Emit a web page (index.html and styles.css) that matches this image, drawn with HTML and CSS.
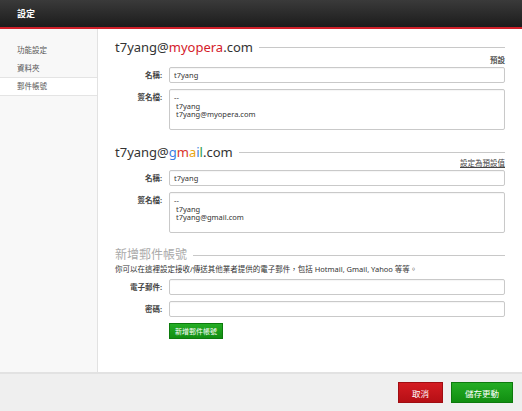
FILE: index.html
```html
<!DOCTYPE html>
<html lang="zh-Hant">
<head>
<meta charset="utf-8">
<link rel="stylesheet" href="styles.css">
</head>
<body>
<div class="app">
  <header class="topbar"><span class="title">設定</span></header>
  <div class="body">
    <nav class="sidebar">
      <div class="nav-item">功能設定</div>
      <div class="nav-item">資料夾</div>
      <div class="nav-item active">郵件帳號</div>
    </nav>
    <main class="content">
      <section class="account">
        <h2 class="heading"><span class="htext">t7yang@<span class="red">myopera</span>.com</span><span class="rule"></span></h2>
        <div class="aux"><span class="bold">預設</span></div>
        <div class="row"><label class="lbl">名稱:</label><div class="field">t7yang</div></div>
        <div class="row"><label class="lbl">簽名檔:</label><div class="field area">--<br>&nbsp;t7yang<br>&nbsp;t7yang@myopera.com</div></div>
      </section>
      <section class="account second">
        <h2 class="heading"><span class="htext">t7yang@<span class="g-blue">g</span><span class="g-red">m</span><span class="g-yellow">a</span><span class="g-blue">i</span><span class="g-green">l</span>.com</span><span class="rule"></span></h2>
        <div class="aux tight"><a class="link">設定為預設值</a></div>
        <div class="row"><label class="lbl">名稱:</label><div class="field">t7yang</div></div>
        <div class="row"><label class="lbl">簽名檔:</label><div class="field area">--<br>&nbsp;t7yang<br>&nbsp;t7yang@gmail.com</div></div>
      </section>
      <section class="account third">
        <h2 class="heading gray"><span class="htext">新增郵件帳號</span><span class="rule"></span></h2>
        <p class="desc">你可以在這裡設定接收/傳送其他業者提供的電子郵件，包括 Hotmail, Gmail, Yahoo 等等。</p>
        <div class="row"><label class="lbl">電子郵件:</label><div class="field"></div></div>
        <div class="row"><label class="lbl">密碼:</label><div class="field"></div></div>
        <div class="row"><span class="lbl"></span><button class="btn small green">新增郵件帳號</button></div>
      </section>
    </main>
  </div>
  <footer class="footer">
    <button class="btn red big cancel">取消</button>
    <button class="btn green big save">儲存更動</button>
  </footer>
</div>
</body>
</html>
```

FILE: styles.css
```css
html, body {
  margin: 0;
  padding: 0;
  width: 522px;
  height: 411px;
  overflow: hidden;
  font-family: "Noto Sans", "Noto Sans CJK TC", sans-serif;
  color: #333;
  background: #fff;
}
.app {
  display: flex;
  flex-direction: column;
  height: 411px;
}
.topbar {
  height: 27px;
  flex: none;
  background: linear-gradient(#3a3a3a, #1c1c1c);
  border-bottom: 2px solid #d0202a;
  display: flex;
  align-items: center;
  padding-left: 17px;
}
.title {
  color: #fff;
  font-size: 9px;
  font-weight: bold;
}
.body {
  flex: 1;
  display: flex;
  min-height: 0;
}
.sidebar {
  width: 98px;
  flex: none;
  background: #f8f8f8;
  border-right: 1px solid #e2e2e2;
  padding-top: 12px;
  box-sizing: border-box;
}
.nav-item {
  height: 17px;
  line-height: 17px;
  font-size: 7.5px;
  color: #555;
  padding-left: 17px;
  border-top: 1px solid transparent;
}
.nav-item.active {
  background: #fff;
  border-top: 1px solid #e4e4e4;
  border-bottom: 1px solid #e4e4e4;
}
.content {
  flex: 1;
  padding: 10px 17px 0 17px;
  min-width: 0;
}
.heading {
  margin: 0;
  display: flex;
  align-items: center;
  font-weight: normal;
  font-size: 13px;
  height: 16px;
  line-height: 16px;
  color: #333;
}
.heading.gray { color: #aaa; font-size: 12px; }
.htext { flex: none; padding-right: 6px; }
.rule {
  flex: 1;
  height: 1px;
  background: #c8c8c8;
}
.red { color: #d4202a; }
.g-blue { color: #3b7de0; }
.g-red { color: #d9342b; }
.g-yellow { color: #e9a513; }
.g-green { color: #2a9a48; }
.aux {
  text-align: right;
  font-size: 7.5px;
  height: 10px;
  line-height: 10px;
  margin-bottom: 2px;
}
.aux.tight { margin-top: -2px; }
.bold { font-weight: bold; color: #555; }
.link { color: #444; text-decoration: underline; }
.row {
  display: flex;
  align-items: flex-start;
  margin-bottom: 6px;
}
.lbl {
  width: 47px;
  flex: none;
  text-align: right;
  font-size: 7.5px;
  font-weight: bold;
  color: #444;
  margin-right: 7px;
  line-height: 16px;
}
.field {
  flex: 1;
  height: 16px;
  box-sizing: border-box;
  border: 1px solid #c9c9c9;
  border-radius: 2px;
  box-shadow: inset 0 1px 1px rgba(0,0,0,0.04);
  font-size: 7.5px;
  line-height: 14px;
  padding-left: 4px;
  color: #333;
  background: #fff;
}
.field.area {
  height: 41px;
  line-height: 8.5px;
  padding-top: 3px;
}
.second { margin-top: 14px; }
.third { margin-top: 14px; }
.desc {
  margin: 1px 0 4px 0;
  font-size: 7.5px;
  line-height: 11px;
  color: #333;
}
.third .row { margin-bottom: 6px; }
.btn {
  border: 1px solid;
  color: #fff;
  font-family: "Noto Sans", "Noto Sans CJK TC", sans-serif;
  cursor: pointer;
  padding: 0;
}
.green {
  background: linear-gradient(#24ad24, #118e11);
  border-color: #0d7a0d;
}
.red.btn, .btn.red {
  background: linear-gradient(#d41c22, #b60f15);
  border-color: #a00d12;
}
.small {
  width: 54px;
  height: 16px;
  font-size: 7px;
}
.footer {
  height: 39px;
  flex: none;
  box-sizing: border-box;
  border-top: 2px solid #e2e2e2;
  background: #efefef;
  display: flex;
  justify-content: flex-end;
  align-items: center;
  padding-right: 9px;
  gap: 8px;
}
.big {
  height: 21px;
  font-size: 8.5px;
}
.cancel { width: 45px; }
.save { width: 62px; }
```
